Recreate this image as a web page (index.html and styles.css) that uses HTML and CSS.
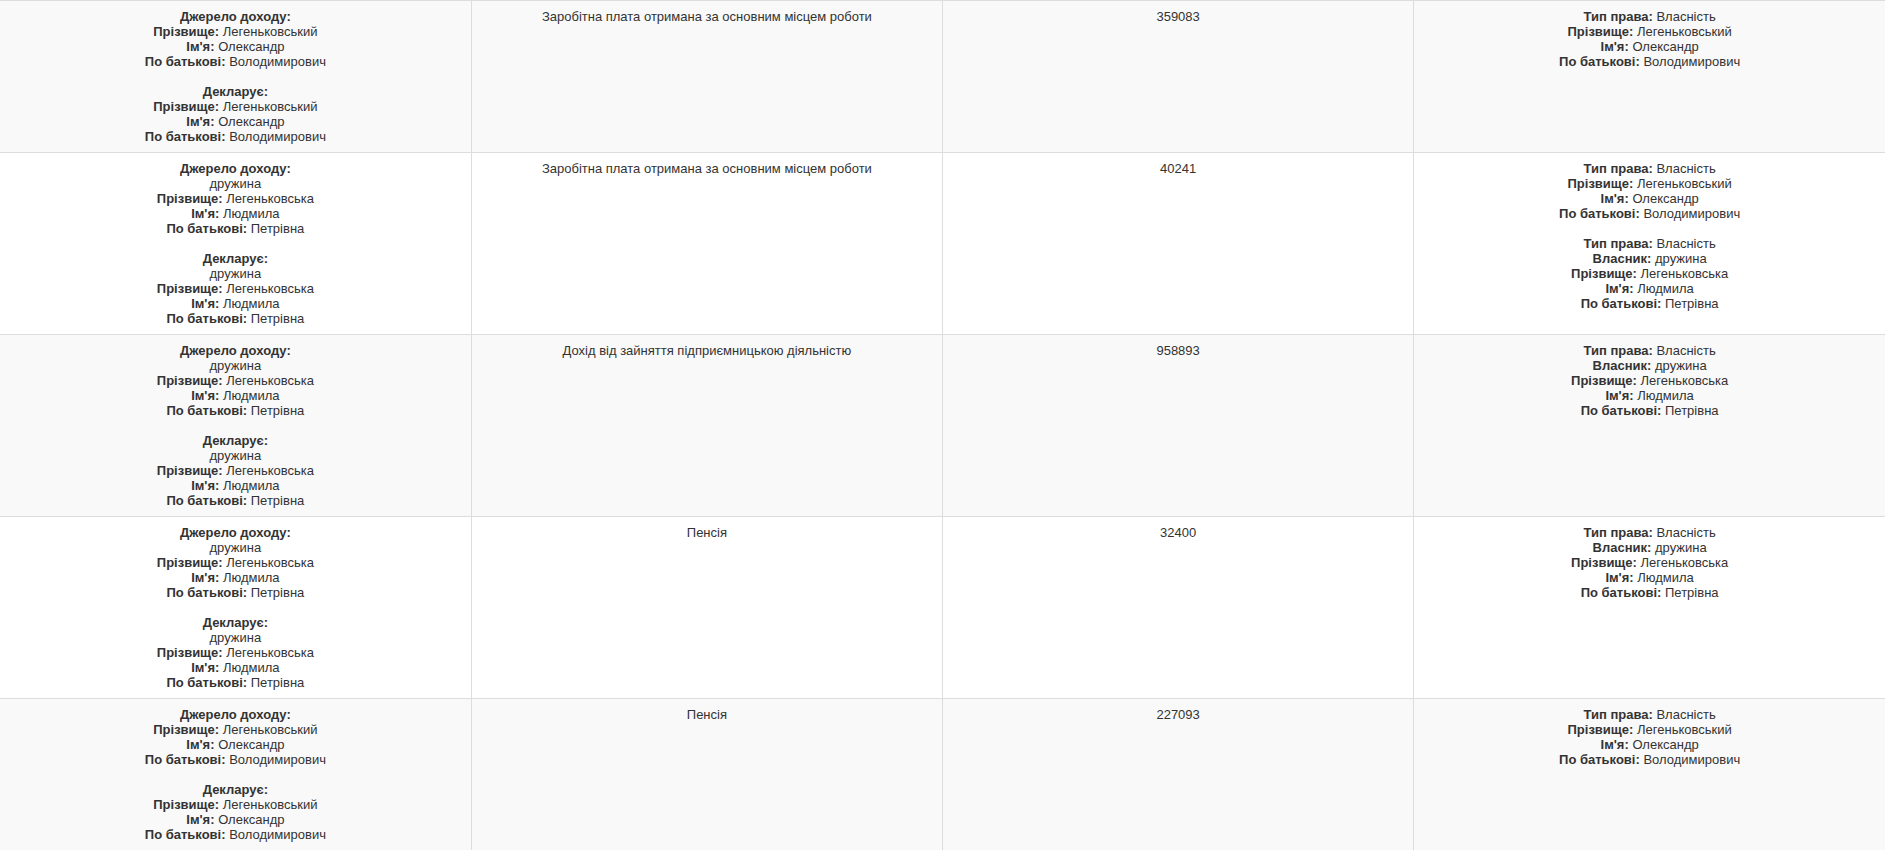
FILE: index.html
```html
<!DOCTYPE html>
<html lang="uk">
<head>
    <meta charset="UTF-8">
    <meta name="viewport" content="width=device-width, initial-scale=1.0">
    <title>Доходи</title>
    <link rel="stylesheet" href="styles.css">
</head>
<body>
    <table class="income-table">
        <tbody>
            <tr>
                <td>
                    <b>Джерело доходу:</b><br>
                    <b>Прізвище:</b> Легеньковський<br>
                    <b>Ім'я:</b> Олександр<br>
                    <b>По батькові:</b> Володимирович<br>
                    <br>
                    <b>Декларує:</b><br>
                    <b>Прізвище:</b> Легеньковський<br>
                    <b>Ім'я:</b> Олександр<br>
                    <b>По батькові:</b> Володимирович
                </td>
                <td>Заробітна плата отримана за основним місцем роботи</td>
                <td>359083</td>
                <td>
                    <b>Тип права:</b> Власність<br>
                    <b>Прізвище:</b> Легеньковський<br>
                    <b>Ім'я:</b> Олександр<br>
                    <b>По батькові:</b> Володимирович
                </td>
            </tr>
            <tr>
                <td>
                    <b>Джерело доходу:</b><br>
                    дружина<br>
                    <b>Прізвище:</b> Легеньковська<br>
                    <b>Ім'я:</b> Людмила<br>
                    <b>По батькові:</b> Петрівна<br>
                    <br>
                    <b>Декларує:</b><br>
                    дружина<br>
                    <b>Прізвище:</b> Легеньковська<br>
                    <b>Ім'я:</b> Людмила<br>
                    <b>По батькові:</b> Петрівна
                </td>
                <td>Заробітна плата отримана за основним місцем роботи</td>
                <td>40241</td>
                <td>
                    <b>Тип права:</b> Власність<br>
                    <b>Прізвище:</b> Легеньковський<br>
                    <b>Ім'я:</b> Олександр<br>
                    <b>По батькові:</b> Володимирович<br>
                    <br>
                    <b>Тип права:</b> Власність<br>
                    <b>Власник:</b> дружина<br>
                    <b>Прізвище:</b> Легеньковська<br>
                    <b>Ім'я:</b> Людмила<br>
                    <b>По батькові:</b> Петрівна
                </td>
            </tr>
            <tr>
                <td>
                    <b>Джерело доходу:</b><br>
                    дружина<br>
                    <b>Прізвище:</b> Легеньковська<br>
                    <b>Ім'я:</b> Людмила<br>
                    <b>По батькові:</b> Петрівна<br>
                    <br>
                    <b>Декларує:</b><br>
                    дружина<br>
                    <b>Прізвище:</b> Легеньковська<br>
                    <b>Ім'я:</b> Людмила<br>
                    <b>По батькові:</b> Петрівна
                </td>
                <td>Дохід від зайняття підприємницькою діяльністю</td>
                <td>958893</td>
                <td>
                    <b>Тип права:</b> Власність<br>
                    <b>Власник:</b> дружина<br>
                    <b>Прізвище:</b> Легеньковська<br>
                    <b>Ім'я:</b> Людмила<br>
                    <b>По батькові:</b> Петрівна
                </td>
            </tr>
            <tr>
                <td>
                    <b>Джерело доходу:</b><br>
                    дружина<br>
                    <b>Прізвище:</b> Легеньковська<br>
                    <b>Ім'я:</b> Людмила<br>
                    <b>По батькові:</b> Петрівна<br>
                    <br>
                    <b>Декларує:</b><br>
                    дружина<br>
                    <b>Прізвище:</b> Легеньковська<br>
                    <b>Ім'я:</b> Людмила<br>
                    <b>По батькові:</b> Петрівна
                </td>
                <td>Пенсія</td>
                <td>32400</td>
                <td>
                    <b>Тип права:</b> Власність<br>
                    <b>Власник:</b> дружина<br>
                    <b>Прізвище:</b> Легеньковська<br>
                    <b>Ім'я:</b> Людмила<br>
                    <b>По батькові:</b> Петрівна
                </td>
            </tr>
            <tr>
                <td>
                    <b>Джерело доходу:</b><br>
                    <b>Прізвище:</b> Легеньковський<br>
                    <b>Ім'я:</b> Олександр<br>
                    <b>По батькові:</b> Володимирович<br>
                    <br>
                    <b>Декларує:</b><br>
                    <b>Прізвище:</b> Легеньковський<br>
                    <b>Ім'я:</b> Олександр<br>
                    <b>По батькові:</b> Володимирович
                </td>
                <td>Пенсія</td>
                <td>227093</td>
                <td>
                    <b>Тип права:</b> Власність<br>
                    <b>Прізвище:</b> Легеньковський<br>
                    <b>Ім'я:</b> Олександр<br>
                    <b>По батькові:</b> Володимирович
                </td>
            </tr>
        </tbody>
    </table>
</body>
</html>
```

FILE: styles.css
```css
/* CSS styles */
body {
    font-family: "Liberation Sans", Arial, sans-serif;
    font-size: 13px;
    line-height: 15px;
    color: #333;
    margin: 0;
    padding: 0;
    background-color: #fff;
}
.income-table {
    width: 100%;
    border-collapse: collapse;
    table-layout: fixed;
}
.income-table td {
    padding: 8px;
    vertical-align: top;
    text-align: center;
    border-top: 1px solid #ddd;
}
.income-table td + td {
    border-left: 1px solid #ddd;
}
.income-table tr:nth-child(odd) td {
    background-color: #f9f9f9;
}
.income-table b {
    font-weight: bold;
}
```
